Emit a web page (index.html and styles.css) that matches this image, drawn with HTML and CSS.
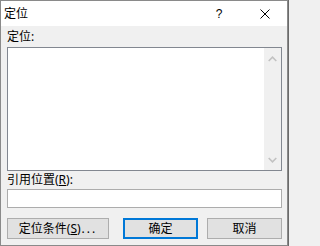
FILE: index.html
```html
<!DOCTYPE html>
<html lang="zh-CN">
<head>
<meta charset="utf-8">
<title>定位</title>
<link rel="stylesheet" href="styles.css">
</head>
<body>
<div class="window">
  <div class="titlebar">
    <span class="title">定位</span>
    <span class="help">?</span>
    <span class="close">
      <svg width="10" height="10" viewBox="0 0 10 10"><path d="M0.5 0.5 L9.5 9.5 M9.5 0.5 L0.5 9.5" stroke="#000" stroke-width="1" fill="none"/></svg>
    </span>
  </div>
  <div class="content">
    <div class="label first">定位:</div>
    <div class="listbox">
      <div class="list-area"></div>
      <div class="scrollbar">
        <svg class="arrow" width="9" height="6" viewBox="0 0 9 6"><path d="M0.7 5 L4.5 1.2 L8.3 5" stroke="#c2c2c2" stroke-width="1.6" fill="none"/></svg>
        <svg class="arrow" width="9" height="6" viewBox="0 0 9 6"><path d="M0.7 1 L4.5 4.8 L8.3 1" stroke="#c2c2c2" stroke-width="1.6" fill="none"/></svg>
      </div>
    </div>
    <div class="label second">引用位置(<u>R</u>):</div>
    <div class="textfield"></div>
    <div class="buttons">
      <div class="btn special">定位条件(<u>S</u>)<span class="dots">...</span></div>
      <div class="btn ok">确定</div>
      <div class="btn cancel">取消</div>
    </div>
  </div>
</div>
</body>
</html>
```

FILE: styles.css
```css
html {
  margin: 0;
  padding: 0;
  background: #f0f0f0;
}
body {
  margin: 0;
  padding: 0;
  width: 289px;
  height: 246px;
  overflow: hidden;
  background: #6b6b6b;
  font-family: "Noto Sans", "Noto Sans CJK SC", sans-serif;
  font-size: 12px;
  color: #000;
}
.window {
  width: 286px;
  height: 244px;
  border: 1px solid #8a8a8a;
  background: #f0f0f0;
  display: flex;
  flex-direction: column;
}
.titlebar {
  height: 25px;
  background: #fff;
  display: flex;
  align-items: center;
  line-height: 14px;
}
.title {
  padding-left: 3px;
  flex: 1;
}
.help {
  width: 10px;
  text-align: center;
  font-family: "Liberation Sans", sans-serif;
  font-size: 12px;
  margin-right: 36px;
}
.close {
  display: flex;
  margin-right: 17px;
}
.content {
  flex: 1;
  padding: 3px 5px 0 6px;
  display: flex;
  flex-direction: column;
}
.label {
  line-height: 15px;
  height: 15px;
}
.label.first {
  margin-bottom: 3px;
}
.label.second {
  margin-top: 1px;
  margin-bottom: 2px;
}
.listbox {
  height: 122px;
  border: 1px solid #828790;
  background: #fff;
  display: flex;
}
.list-area {
  flex: 1;
}
.scrollbar {
  width: 17px;
  background: #f0f0f0;
  display: flex;
  flex-direction: column;
  justify-content: space-between;
  align-items: center;
  padding: 8px 0 7px;
}
.arrow {
  display: block;
}
.textfield {
  height: 17px;
  border: 1px solid #acacac;
  background: #fff;
}
.buttons {
  margin-top: 10px;
  display: flex;
}
.btn {
  height: 19px;
  border: 1px solid #adadad;
  background: #e1e1e1;
  display: flex;
  align-items: center;
  justify-content: center;
  line-height: 14px;
}
.btn.special {
  width: 100px;
  margin-right: 14px;
}
.dots {
  letter-spacing: 2px;
  margin-left: 1px;
}
.btn.ok {
  width: 71px;
  height: 17px;
  border: 2px solid #0078d7;
  margin-right: 9px;
}
.btn.cancel {
  width: 73px;
}
u {
  text-decoration-thickness: 1px;
  text-underline-offset: 1px;
}
```
